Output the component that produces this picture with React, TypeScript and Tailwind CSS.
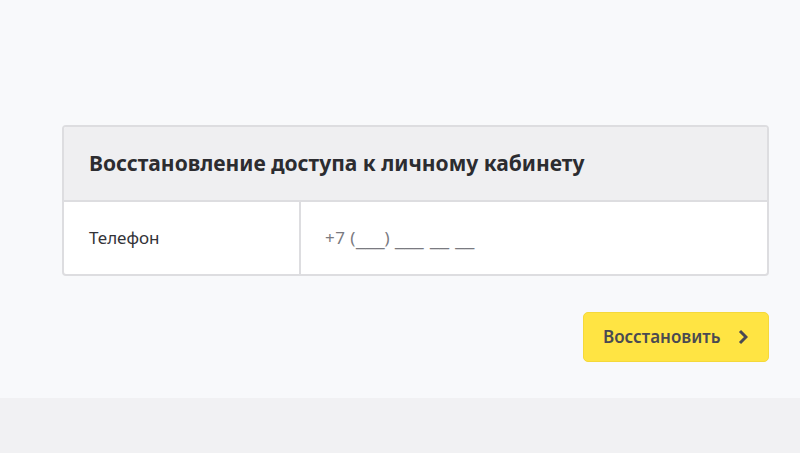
import React from 'react';

const RestoreAccess = () => {
  return (
    <div className="min-h-screen flex flex-col bg-[#f8f9fb] font-['Noto_Sans',sans-serif]">
      <div className="h-[398px] px-[62px] pt-[125px]">
        {/* Card */}
        <div className="w-[707px] bg-white border-2 border-[#dddde0] rounded-[4px] overflow-hidden">
          <div className="h-[75px] bg-[#efeff1] border-b-2 border-[#dddde0] flex items-center px-[25px]">
            <h1 className="text-[21px] font-bold text-[#2c2c30]">Восстановление доступа к личному кабинету</h1>
          </div>
          <div className="flex h-[72px]">
            <div className="w-[237px] flex items-center px-[25px] border-r-2 border-[#dddde0] text-[17px] text-[#333338]">
              Телефон
            </div>
            <div className="flex-1 flex items-center px-[24px] text-[17px] text-[#7a7a80]">
              <span className="tracking-[0.5px]">+7 (</span>
              <span className="font-['DejaVu_Sans',sans-serif] text-[19px]">___</span>
              <span className="mr-[1px]">)&nbsp;</span>
              <span className="font-['DejaVu_Sans',sans-serif] text-[19px]">___</span>
              <span className="mx-[1px]">&nbsp;</span>
              <span className="font-['DejaVu_Sans',sans-serif] text-[19px]">__</span>
              <span className="mx-[1px]">&nbsp;</span>
              <span className="font-['DejaVu_Sans',sans-serif] text-[19px]">__</span>
            </div>
          </div>
        </div>

        <div className="w-[707px] flex justify-end mt-[36px]">
          <button className="w-[186px] h-[50px] bg-[#ffe443] border border-[#f5d93a] rounded-[5px] flex items-center justify-between pl-[19px] pr-[20px] text-[17px] font-semibold text-[#4a4a52]">
            <span>Восстановить</span>
            <svg width="10" height="16" viewBox="0 0 10 16" fill="none">
              <path d="M2 2l6 6-6 6" stroke="#4a4a52" strokeWidth="3" strokeLinejoin="miter" />
            </svg>
          </button>
        </div>
      </div>
      <div className="flex-1 bg-[#f1f1f3]" />
    </div>
  );
};

export default RestoreAccess;
